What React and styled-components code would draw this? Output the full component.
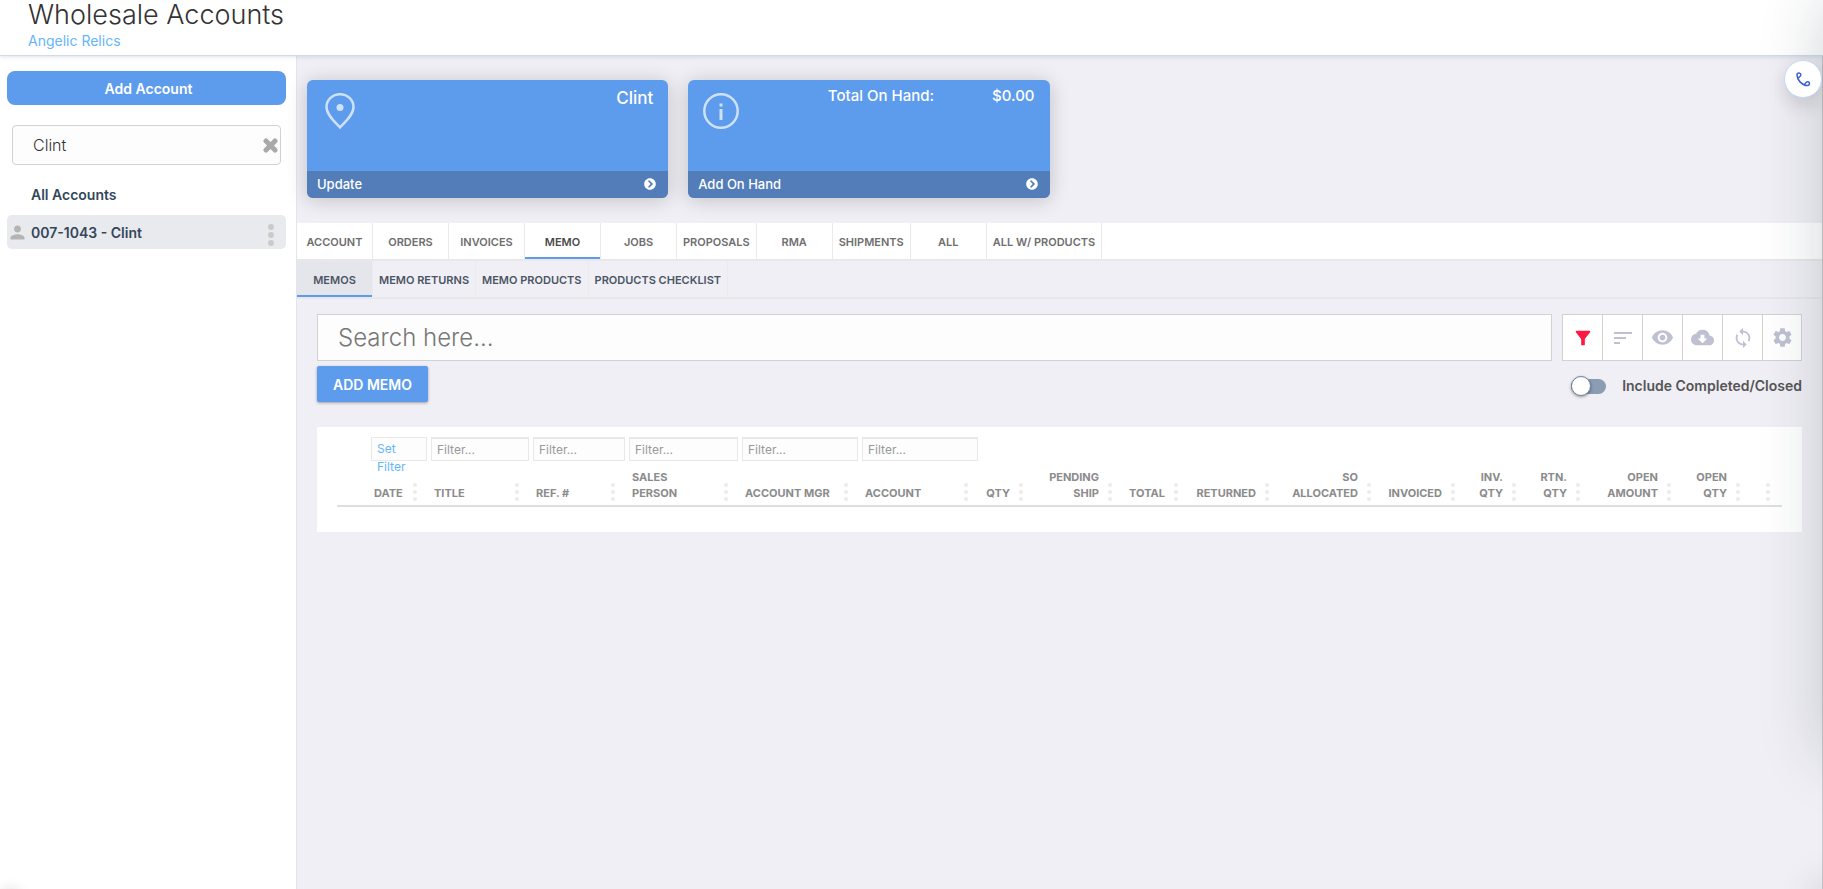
import React from "react";
import styled, { createGlobalStyle, css } from "styled-components";
import { MdSort, MdRemoveRedEye, MdCloudDownload, MdSync, MdSettings, MdPerson, MdFilterAlt } from "react-icons/md";
import { FaChevronCircleRight } from "react-icons/fa";

const Global = createGlobalStyle`
  *, *::before, *::after { box-sizing: border-box; }
  body { margin: 0; background: #f0eff5; font-family: Inter, sans-serif; color: #555; overflow-x: hidden; }
  button, input { font-family: inherit; }
  button { cursor: pointer; border: 0; padding: 0; }
  a { text-decoration: none; }
`;

const Page = styled.div`
  min-height: 100vh;
  display: flex;
  flex-direction: column;
`;

const Header = styled.header`
  position: relative;
  height: 56px;
  padding: 0 28px;
  background: #fff;
  border-bottom: 1px solid #cfdde9;
  box-shadow: 0 1px 4px rgba(120, 150, 180, 0.25);
`;

const Title = styled.h1`
  margin: 0;
  font-size: 27px;
  font-weight: 300;
  line-height: 30px;
  color: #333;
`;

const Company = styled.a`
  display: block;
  font-size: 14px;
  line-height: 22px;
  color: #66b5fb;
`;

const Body = styled.div`
  flex: 1;
  display: flex;
`;

const Sidebar = styled.aside`
  flex: 0 0 297px;
  min-width: 0;
  padding: 15px 10px 0 7px;
  background: #fff;
  border-right: 1px solid #dfe7ec;
`;

const AddAccount = styled.button`
  width: 100%;
  height: 34px;
  padding-left: 4px;
  border-radius: 8px;
  background: #5d9bec;
  color: #fff;
  font-size: 14px;
  font-weight: 600;
`;

const AccountSearch = styled.div`
  display: flex;
  align-items: center;
  height: 40px;
  margin: 20px 5px 0;
  border: 1px solid #d2d2d2;
  border-radius: 4px;
  background: #fdfdfd;
`;

const AccountInput = styled.input`
  flex: 1;
  min-width: 0;
  border: 0;
  outline: 0;
  padding: 0 0 0 20px;
  background: none;
  font-size: 16px;
  font-weight: 300;
  color: #333;
`;

const ClearButton = styled.button`
  display: flex;
  padding-right: 2px;
  background: none;
`;

const AccountList = styled.ul`
  list-style: none;
  margin: 12px 0 0;
  padding: 0;
`;

const AccountRow = styled.li`
  display: flex;
  align-items: center;
  height: 34px;
  margin-bottom: 4px;
  padding: 0 12px 0 0;
  border-radius: 5px;
  background: ${(p) => (p.$selected ? "#e9eaee" : "none")};
`;

const AccountLink = styled.a`
  flex: 1;
  font-size: 14px;
  font-weight: 600;
  color: #33475b;
`;

const IconSlot = styled.span`
  display: flex;
  flex: 0 0 24px;
  color: #b4b4b4;
`;

const MoreButton = styled.button`
  display: flex;
  background: none;
  margin-top: 6px;
`;

const Main = styled.main`
  flex: 1;
  min-width: 0;
  border-right: 1px solid #cacacc;
`;

const Cards = styled.section`
  display: grid;
  grid-template-columns: repeat(4, 1fr);
  gap: 20px;
  padding: 24px 10px 25px;
`;

const Card = styled.article`
  display: flex;
  flex-direction: column;
  height: 118px;
  border-radius: 6px;
  overflow: hidden;
  background: #5d9bec;
  color: #fff;
  font-weight: 500;
  box-shadow: 0 2px 20px rgba(0, 0, 0, 0.2);
`;

const CardBody = styled.div`
  flex: 1;
  display: flex;
  justify-content: space-between;
  padding: 8px 15px 0;
`;

const CardIcon = styled.svg`
  width: 36px;
  height: 36px;
  margin-top: 5px;
  opacity: 0.7;
`;

const CardName = styled.strong`
  font-size: 17px;
  line-height: 20px;
  font-weight: 500;
`;

const CardStat = styled.div`
  display: flex;
  gap: 58px;
  font-size: 15px;
  line-height: 16px;
`;

const CardAction = styled.button`
  display: flex;
  align-items: center;
  justify-content: space-between;
  height: 27px;
  padding: 0 12px 2px 10px;
  background: #527db8;
  color: #fff;
  font-size: 13px;
  font-weight: 500;
`;

const Tabs = styled.nav`
  display: flex;
  height: 38px;
  background: ${(p) => (p.$sub ? "#f0eff5" : "#fff")};
  border-bottom: 2px solid #e8e8e8;
`;

const Tab = styled.a`
  display: flex;
  align-items: center;
  justify-content: center;
  min-width: 76px;
  padding: 2px 6px 0;
  border-right: 1px solid #ebebed;
  font-size: 11px;
  font-weight: 600;
  white-space: nowrap;
  color: ${(p) => (p.$sub ? "#4b5563" : p.$active ? "#4a4a4a" : "#6e6e6e")};
  ${(p) => p.$active && css`
    box-shadow: inset 0 -2px #5d9bec;
    background: ${p.$sub ? "#e5e5ec" : "#fff"};
  `}
`;

const Content = styled.section`
  padding: 15px 20px 20px;
`;

const SearchBar = styled.div`
  display: flex;
  gap: 10px;
`;

const SearchInput = styled.input`
  flex: 1;
  min-width: 0;
  height: 47px;
  padding: 0 20px;
  border: 1px solid #d2d2d2;
  border-radius: 0;
  background: #fdfdfd;
  font-size: 24px;
  font-weight: 300;
  outline: 0;
  &::placeholder { color: #777; opacity: 1; }
`;

const Toolbar = styled.div`
  display: grid;
  grid-template-columns: repeat(6, 40px);
  height: 47px;
  background: #fff;
`;

const ToolButton = styled.button`
  display: flex;
  align-items: center;
  justify-content: center;
  border: 1px solid #d2d2d2;
  border-right-width: 0;
  background: none;
  color: ${(p) => (p.$active ? "#fd1941" : "#bfc1d3")};
  &:last-child { border-right-width: 1px; }
`;

const Actions = styled.div`
  display: flex;
  justify-content: space-between;
  margin: 5px 0 25px;
`;

const AddMemo = styled.button`
  height: 36px;
  padding: 0 16px;
  border-radius: 2px;
  background: #5d9bec;
  color: #fff;
  font-size: 14px;
  font-weight: 600;
  box-shadow: 0 1px 3px rgba(0, 0, 0, 0.35);
`;

const Toggle = styled.label`
  display: flex;
  align-items: center;
  gap: 16px;
  padding-top: 2px;
  font-size: 14px;
  font-weight: 600;
  color: #555;
`;

const Switch = styled.input`
  appearance: none;
  width: 35px;
  height: 15px;
  margin: 2px 0 0;
  border-radius: 8px;
  background: #8b9db5;
  &::before {
    content: "";
    display: block;
    width: 20px;
    height: 20px;
    margin-top: -3px;
    border-radius: 50%;
    border: 1px solid #6f84a0;
    background: #fff;
    box-shadow: 0 1px 3px rgba(0, 0, 0, 0.4);
  }
`;

const Panel = styled.div`
  padding: 8px 20px 25px;
  background: #fff;
`;

const Table = styled.table`
  width: 100%;
  table-layout: fixed;
  border-collapse: collapse;
  border-bottom: 2px solid #dedfdf;
`;

const HeadCell = styled.th`
  height: 71px;
  padding: 2px;
  vertical-align: top;
  text-align: ${(p) => (p.$right ? "right" : "left")};
  font-size: 11px;
  font-weight: 700;
  line-height: 16px;
  color: #8b8b8b;
`;

const FilterSlot = styled.div`
  height: 24px;
`;

const FilterInput = styled.input`
  display: block;
  width: 100%;
  height: 24px;
  padding: 0 5px;
  border: 1px solid #e8e8e8;
  border-top-width: 2px;
  border-radius: 0;
  background: #fdfdfd;
  font-size: 12px;
  &::placeholder { color: #999; opacity: 1; }
`;

const SetFilter = styled.button`
  display: flex;
  width: 100%;
  height: 24px;
  padding: 2px 20px 0 5px;
  border: 1px solid #e8e8e8;
  background: #fdfdfd;
  font-size: 12px;
  line-height: 18px;
  color: #66b5fb;
  text-align: left;
`;

const HeadLabel = styled.div`
  display: flex;
  justify-content: ${(p) => (p.$right ? "flex-end" : "space-between")};
  align-items: flex-end;
  gap: 9px;
  height: 40px;
  padding: 0 10px 0 3px;
  white-space: pre;
`;

const DotsSvg = styled.svg`
  flex: none;
`;

const PhoneButton = styled.button`
  position: fixed;
  top: 60px;
  right: 1px;
  width: 38px;
  height: 38px;
  display: flex;
  align-items: center;
  justify-content: center;
  border: 1px solid #c3d9f9;
  border-radius: 50%;
  background: #fff;
  box-shadow: 0 8px 20px rgba(0, 0, 0, 0.14);
`;

const Drawer = styled.div`
  position: fixed;
  top: 0;
  left: 100%;
  width: 320px;
  height: 757px;
  box-shadow: 0 0 60px rgba(20, 40, 50, 0.2);
`;

const CornerGlow = styled.div`
  position: fixed;
  top: 100%;
  left: ${(p) => (p.$right ? "100%" : "0")};
  width: 20px;
  height: 20px;
  border-radius: ${(p) => (p.$right ? "0" : "50%")};
  box-shadow: ${(p) => (p.$right ? "0 0 40px 2px rgba(0, 0, 0, 0.3)" : "0 0 14px rgba(0, 0, 0, 0.15)")};
`;

function Dots({ size, step, color }) {
  return (
    <DotsSvg width={size} height={step * 2 + size} fill={color} aria-hidden="true">
      {[0, 1, 2].map((i) => (
        <circle key={i} cx={size / 2} cy={size / 2 + i * step} r={size / 2} />
      ))}
    </DotsSvg>
  );
}

const tabs = ["ACCOUNT", "ORDERS", "INVOICES", "MEMO", "JOBS", "PROPOSALS", "RMA", "SHIPMENTS", "ALL", "ALL W/ PRODUCTS"];
const subTabs = ["MEMOS", "MEMO RETURNS", "MEMO PRODUCTS", "PRODUCTS CHECKLIST"];

const columns = [
  { w: 60, label: "DATE", filter: "set" },
  { w: 102, label: "TITLE", filter: "text" },
  { w: 96, label: "REF. #", filter: "text" },
  { w: 113, label: "SALES\nPERSON", filter: "text" },
  { w: 120, label: "ACCOUNT MGR", filter: "text" },
  { w: 120, label: "ACCOUNT", filter: "text" },
  { w: 55, label: "QTY", right: true },
  { w: 89, label: "PENDING\nSHIP", right: true },
  { w: 66, label: "TOTAL", right: true },
  { w: 91, label: "RETURNED", right: true },
  { w: 102, label: "SO\nALLOCATED", right: true },
  { w: 84, label: "INVOICED", right: true },
  { w: 61, label: "INV.\nQTY", right: true },
  { w: 64, label: "RTN.\nQTY", right: true },
  { w: 91, label: "OPEN\nAMOUNT", right: true },
  { w: 69, label: "OPEN\nQTY", right: true },
  { w: 30, label: "", right: true },
];

const tools = [
  { name: "Filter", icon: <MdFilterAlt size={22} />, active: true },
  { name: "Sort", icon: <MdSort size={24} /> },
  { name: "Columns", icon: <MdRemoveRedEye size={23} /> },
  { name: "Download", icon: <MdCloudDownload size={23} /> },
  { name: "Refresh", icon: <MdSync size={22} /> },
  { name: "Settings", icon: <MdSettings size={23} /> },
];

export default function App() {
  return (
    <Page>
      <Global />
      <Header>
        <Title>Wholesale Accounts</Title>
        <Company href="#company">Angelic Relics</Company>
      </Header>
      <Body>
        <Sidebar>
          <AddAccount>Add Account</AddAccount>
          <AccountSearch>
            <AccountInput aria-label="Search accounts" defaultValue="Clint" />
            <ClearButton aria-label="Clear search">
              <svg width="15" height="15" stroke="#a9a9a9" strokeWidth="5" strokeLinecap="round" aria-hidden="true">
                <path d="M3 3l9 9M12 3l-9 9" />
              </svg>
            </ClearButton>
          </AccountSearch>
          <AccountList>
            <AccountRow>
              <IconSlot />
              <AccountLink href="#all">All Accounts</AccountLink>
            </AccountRow>
            <AccountRow $selected>
              <IconSlot><MdPerson size={21} /></IconSlot>
              <AccountLink href="#clint">007-1043 - Clint</AccountLink>
              <MoreButton aria-label="Account options"><Dots size={6} step={8} color="#cbcbcb" /></MoreButton>
            </AccountRow>
          </AccountList>
        </Sidebar>
        <Main>
          <Cards>
            <Card>
              <CardBody>
                <CardIcon viewBox="0 0 36 36" fill="none" stroke="#fff" strokeWidth="2.5" aria-hidden="true">
                  <path d="M18 34.500C13 29 4.500 22 4.500 14a13.500 12.800 0 0 1 27 0c0 8-8.500 15-13.500 20.500z" />
                  <circle cx="18" cy="14.500" r="3.500" fill="#fff" stroke="none" />
                </CardIcon>
                <CardName>Clint</CardName>
              </CardBody>
              <CardAction>Update<FaChevronCircleRight size={12} /></CardAction>
            </Card>
            <Card>
              <CardBody>
                <CardIcon viewBox="0 0 36 36" fill="none" stroke="#fff" strokeWidth="2.5" aria-hidden="true">
                  <circle cx="18" cy="18" r="16.700" />
                  <path d="M18 10.500v3M18 16v11" strokeWidth="3" />
                </CardIcon>
                <CardStat><span>Total On Hand:</span><span>$0.00</span></CardStat>
              </CardBody>
              <CardAction>Add On Hand<FaChevronCircleRight size={12} /></CardAction>
            </Card>
          </Cards>
          <Tabs aria-label="Account sections">
            {tabs.map((t) => <Tab key={t} href="#tab" $active={t === "MEMO"}>{t}</Tab>)}
          </Tabs>
          <Tabs $sub aria-label="Memo sections">
            {subTabs.map((t) => <Tab key={t} href="#subtab" $sub $active={t === "MEMOS"}>{t}</Tab>)}
          </Tabs>
          <Content>
            <SearchBar>
              <SearchInput aria-label="Search memos" placeholder="Search here..." />
              <Toolbar>
                {tools.map((t) => <ToolButton key={t.name} aria-label={t.name} $active={t.active}>{t.icon}</ToolButton>)}
              </Toolbar>
            </SearchBar>
            <Actions>
              <AddMemo>ADD MEMO</AddMemo>
              <Toggle><Switch type="checkbox" />Include Completed/Closed</Toggle>
            </Actions>
            <Panel>
              <Table>
                <colgroup>
                  <col width={32} />
                  {columns.map((c, i) => <col key={i} width={c.w} />)}
                </colgroup>
                <thead>
                  <tr>
                    <HeadCell as="td" />
                    {columns.map((c, i) => (
                      <HeadCell key={i} $right={c.right}>
                        <FilterSlot>
                          {c.filter === "set" && <SetFilter>Set Filter</SetFilter>}
                          {c.filter === "text" && <FilterInput aria-label={`Filter ${c.label}`} placeholder="Filter..." />}
                        </FilterSlot>
                        <HeadLabel $right={c.right}>
                          <span>{c.label}</span>
                          <Dots size={4} step={7} color="#ececec" />
                        </HeadLabel>
                      </HeadCell>
                    ))}
                  </tr>
                </thead>
              </Table>
            </Panel>
          </Content>
        </Main>
      </Body>
      <Drawer />
      <CornerGlow />
      <CornerGlow $right />
      <PhoneButton aria-label="Open phone">
        <svg width="15" height="15" viewBox="0 0 15 15" fill="none" stroke="#3b5fd6" strokeWidth="1.5" strokeLinecap="round" aria-hidden="true">
          <path d="M1 3C1 8 6 13.500 11.500 13.500M1 3C1 .5 4.800 .5 4.800 2.800 4.800 4.800 3 5 2 6.300M11.500 13.500c2.500 0 2.500-3.800.2-3.800-2 0-2.200 1.600-3.400 2.800" />
        </svg>
      </PhoneButton>
    </Page>
  );
}
